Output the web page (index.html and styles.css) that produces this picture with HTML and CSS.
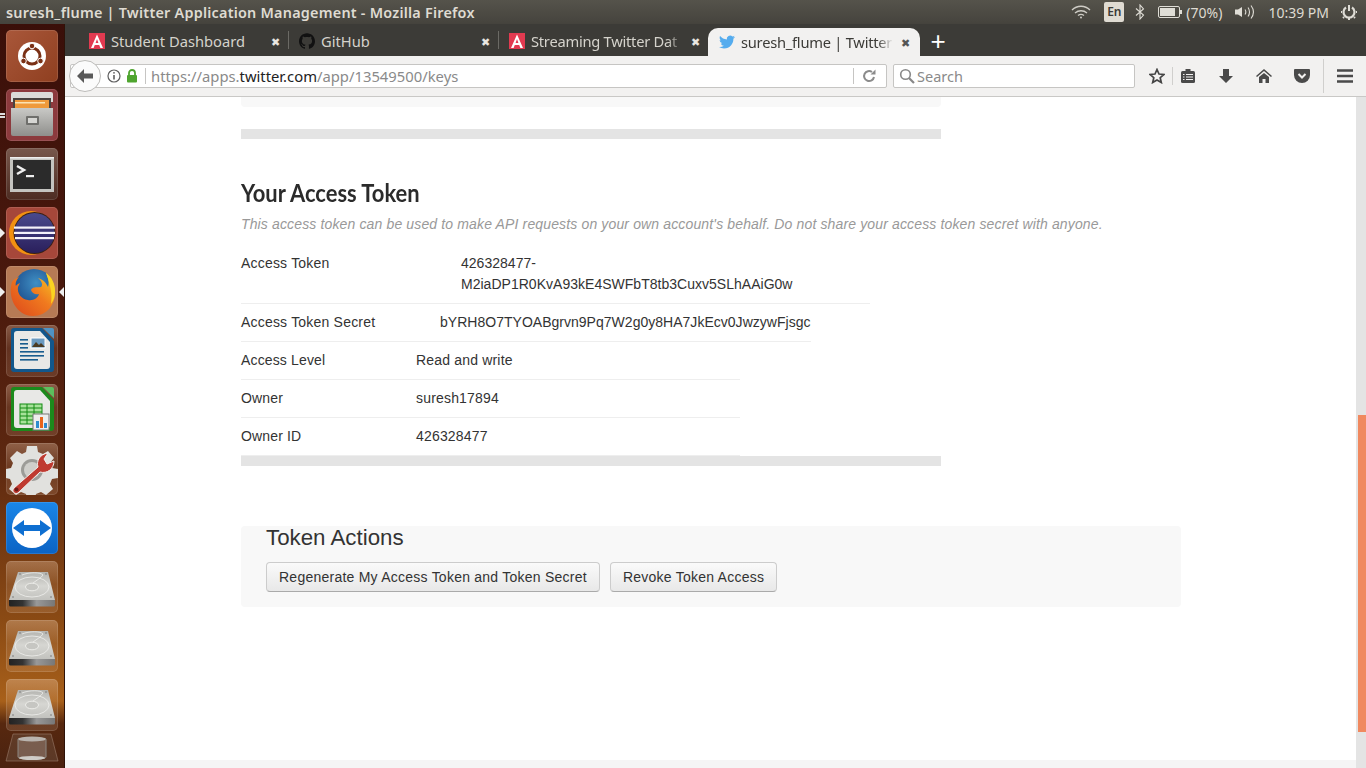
FILE: index.html
```html
<!DOCTYPE html>
<html lang="en">
<head>
  <meta charset="UTF-8" />
  <title>suresh_flume | Twitter Application Management - Mozilla Firefox</title>
  <link rel="stylesheet" href="styles.css">
</head>
<body>
  <svg class="defs" aria-hidden="true">
    <defs>
      <linearGradient id="driveTop" x1="0" y1="0" x2="0" y2="1"><stop offset="0" stop-color="#b4b4b0"/><stop offset=".5" stop-color="#d6d6d2"/><stop offset="1" stop-color="#c2c2be"/></linearGradient>
      <linearGradient id="driveSlot" x1="0" y1="0" x2="1" y2="0"><stop offset="0" stop-color="#222"/><stop offset=".3" stop-color="#333"/><stop offset=".6" stop-color="#999"/><stop offset="1" stop-color="#777"/></linearGradient>
      <linearGradient id="eclipseBall" x1="0" y1="0" x2="0" y2="1"><stop offset="0" stop-color="#4a4a8c"/><stop offset="1" stop-color="#2a1f5c"/></linearGradient>
      <linearGradient id="cabinet" x1="0" y1="0" x2="0" y2="1"><stop offset="0" stop-color="#c9c9c6"/><stop offset="1" stop-color="#8f8f8c"/></linearGradient>
      <radialGradient id="foxBlue" cx=".55" cy=".35" r=".6"><stop offset="0" stop-color="#3f8fc4"/><stop offset="1" stop-color="#1d4f8e"/></radialGradient>
      <linearGradient id="foxFire" x1="1" y1="0" x2="0" y2="1"><stop offset="0" stop-color="#f7cf22"/><stop offset=".45" stop-color="#f07a1f"/><stop offset="1" stop-color="#dc451b"/></linearGradient>
      <symbol id="fav-a" viewBox="0 0 16 16">
        <rect width="16" height="16" fill="#e23a50"/>
        <path d="M8 1.500 14 15h-2.600l-1.200-3H5.800l-1.200 3H2zM8 6 6.600 10h2.800z" fill="#fff"/>
      </symbol>
      <symbol id="drive" viewBox="0 0 52 52">
        <path d="M12 11h30l7 28H3z" fill="url(#driveTop)"/>
        <path d="M3 39h46v5a1.500 1.500 0 0 1-1.500 1.500h-43A1.500 1.500 0 0 1 3 44z" fill="url(#driveSlot)"/>
        <ellipse cx="26" cy="26" rx="17" ry="10" fill="none" stroke="#efefec" stroke-width=".8"/>
        <ellipse cx="26" cy="26" rx="6.500" ry="3.800" fill="#c6c6c2" stroke="#efefec" stroke-width=".9"/>
        <path d="M16 14c7-3 19-3 21 0-2 3-6 5-10 8" fill="none" stroke="#efefec" stroke-width=".8"/>
        <g fill="#777"><circle cx="14" cy="13" r=".8"/><circle cx="40" cy="13" r=".8"/><circle cx="7" cy="36" r=".8"/><circle cx="45" cy="36" r=".8"/></g>
      </symbol>
    </defs>
  </svg>

  <header class="topbar">
    <span class="win-title">suresh_flume | Twitter Application Management - Mozilla Firefox</span>
    <div class="indicators">
      <svg class="ind-wifi" width="20" height="14" viewBox="0 0 20 14" fill="none" stroke="#cfcdc6" stroke-width="1.300"><path d="M1 5c5-5 13-5 18 0M4 8c3.500-3 8.500-3 12 0M7 10.500c2-1.500 4-1.500 6 0"/><circle cx="10" cy="12.500" r="1" fill="#cfcdc6" stroke="none"/></svg>
      <span class="ind-lang">En</span>
      <svg class="ind-bt" width="10" height="16" viewBox="0 0 10 16" fill="none" stroke="#dfddd6" stroke-width="1.100"><path d="M1 4.500 8.500 11 5 15V1l3.500 4L1 11.500"/></svg>
      <svg class="ind-batt" width="24" height="12" viewBox="0 0 24 12"><rect x=".5" y=".5" width="21" height="11" rx="1.500" fill="none" stroke="#dfddd6"/><rect x="2" y="2" width="15" height="8" fill="#dfddd6"/><rect x="22" y="4" width="2" height="4" fill="#dfddd6"/></svg>
      <span class="ind-text ind-pct">(70%)</span>
      <svg class="ind-vol" width="20" height="16" viewBox="0 0 20 16" fill="none" stroke="#dfddd6" stroke-width="1.100"><path d="M1 5.500h3L8 3v10L4 10.500H1z" fill="#dfddd6" stroke="none"/><path d="M11 5.500c1 1.500 1 3.500 0 5M14 3.500c2 2.500 2 6.500 0 9M17 1.500c3 4 3 9 0 13"/></svg>
      <span class="ind-text ind-time">10:39 PM</span>
      <svg class="ind-power" width="16" height="16" viewBox="0 0 16 16" fill="none" stroke="#dfddd6"><path d="M5 3.500a5.500 5.500 0 1 0 6 0" stroke-width="2.200"/><path d="M8 1v6" stroke-width="2"/><path d="M8 13.500V16M1 8H0M16 8h-1M3 13l-1 1M13 13l1 1" stroke-width="2"/></svg>
    </div>
  </header>

  <div class="desktop">
    <nav class="launcher">
      <div class="tile tile-ubuntu">
        <svg width="52" height="52" viewBox="0 0 52 52"><circle cx="26" cy="26" r="14" fill="#fff"/><circle cx="26" cy="26" r="8" fill="none" stroke="#7a3015" stroke-width="3"/><circle cx="26" cy="16" r="2.800" fill="#7a3015" stroke="#fff"/><circle cx="17.500" cy="31" r="2.800" fill="#7a3015" stroke="#fff"/><circle cx="34.500" cy="31" r="2.800" fill="#7a3015" stroke="#fff"/></svg>
      </div>
      <div class="tile tile-files">
        <i class="pip pip-double"></i>
        <svg width="52" height="52" viewBox="0 0 52 52"><path d="M5 5a2 2 0 0 1 2-2h38a2 2 0 0 1 2 2v8H5z" fill="#dcdcd9"/><rect x="7" y="9" width="38" height="10" fill="#4a4440"/><rect x="9" y="11" width="34" height="9" fill="#ef9a3c"/><rect x="9" y="13" width="30" height="1.500" fill="#fbe3b4"/><path d="M5 19h42v26a2 2 0 0 1-2 2H7a2 2 0 0 1-2-2z" fill="url(#cabinet)"/><rect x="20" y="27" width="13" height="9" rx="1" fill="#6f6f6c"/><rect x="22" y="29" width="9" height="5" fill="#d6d6d3"/></svg>
      </div>
      <div class="tile tile-terminal">
        <svg width="52" height="52" viewBox="0 0 52 52"><rect x="4" y="9" width="44" height="35" fill="#c4c4c0"/><rect x="4" y="9" width="44" height="1.500" fill="#eee"/><rect x="7" y="12" width="38" height="29" fill="#2b2b2b"/><path d="M11 18l7 4-7 4" fill="none" stroke="#eee" stroke-width="2.500"/><rect x="20" y="27" width="8" height="2.200" fill="#eee"/></svg>
      </div>
      <div class="tile tile-eclipse">
        <i class="pip pip-left"></i>
        <svg width="52" height="52" viewBox="0 0 52 52"><circle cx="25" cy="26" r="22" fill="#f29111"/><circle cx="28.500" cy="26" r="21" fill="#3a1f14"/><circle cx="28.500" cy="26" r="20" fill="url(#eclipseBall)"/><rect x="8" y="19.500" width="41" height="2.200" fill="#f4f2fa"/><rect x="8" y="24.800" width="41" height="2.200" fill="#f4f2fa"/><rect x="9" y="30" width="39" height="2.200" fill="#f4f2fa"/></svg>
      </div>
      <div class="tile tile-firefox">
        <i class="pip pip-left"></i><i class="pip pip-right"></i>
        <svg width="52" height="52" viewBox="0 0 52 52"><circle cx="28" cy="23" r="20" fill="url(#foxBlue)"/><path d="M6 16C1 32 11 50 27 50c14 0 23-12 22-25-1-8-4-14-9-18 3 6 3 11 2 14-2-5-6-8-10-9 4 3 5 7 3 9-3 1-8-1-10 3 1 3 4 5 8 4-1 4-6 7-11 6-7-1-11-7-10-13l2-4c-2 1-4 2-4 3-1-2 0-6 3-9-3 1-6 3-7 5z" fill="url(#foxFire)"/><path d="M40 7c6 4 9 11 9 18 0 5-1 9-4 13 1-7 1-15-5-31z" fill="#fbd321"/></svg>
      </div>
      <div class="tile tile-glass">
        <svg width="52" height="52" viewBox="0 0 52 52"><path d="M8 3h28l12 13v28a3 3 0 0 1-3 3H8a3 3 0 0 1-3-3V6a3 3 0 0 1 3-3z" fill="#12578c"/><path d="M11 6h23l10 11v24a3 3 0 0 1-3 3H11a3 3 0 0 1-3-3V9a3 3 0 0 1 3-3z" fill="#e8e8e6"/><path d="M37 3h9a2 2 0 0 1 2 2v9z" fill="#4f93c4"/><g fill="#185c8e"><rect x="14" y="14" width="8" height="1.600"/><rect x="14" y="18" width="8" height="1.600"/><rect x="14" y="22" width="8" height="1.600"/><rect x="14" y="26" width="24" height="1.600"/><rect x="14" y="30" width="24" height="1.600"/><rect x="14" y="34" width="18" height="1.600"/></g><rect x="25" y="13" width="14" height="10" fill="#6b9ac0" stroke="#fff"/><path d="M26 22l4-5 3 3 2-2 4 4z" fill="#4b3b22"/></svg>
      </div>
      <div class="tile tile-glass">
        <svg width="52" height="52" viewBox="0 0 52 52"><path d="M8 3h28l12 13v28a3 3 0 0 1-3 3H8a3 3 0 0 1-3-3V6a3 3 0 0 1 3-3z" fill="#1c8a1c"/><path d="M11 6h23l10 11v24a3 3 0 0 1-3 3H11a3 3 0 0 1-3-3V9a3 3 0 0 1 3-3z" fill="#e8e8e6"/><path d="M37 3h9a2 2 0 0 1 2 2v9z" fill="#5cbf5c"/><rect x="14" y="20" width="22" height="20" fill="#a7e29a" stroke="#138a13"/><path d="M14 24h22M14 28h22M14 32h22M14 36h22M21 20v20M28 20v20" stroke="#138a13"/><rect x="27" y="30" width="16" height="16" fill="#eee" stroke="#777"/><rect x="30" y="37" width="3" height="7" fill="#2e8ccf"/><rect x="34" y="33" width="3" height="11" fill="#e8641b"/><rect x="38" y="39" width="3" height="5" fill="#2e8ccf"/></svg>
      </div>
      <div class="tile tile-glass">
        <svg width="52" height="52" viewBox="0 0 52 52"><path d="M21 3h10l1 6 5 2 5-3 6 7-4 5 2 5 6 1v9l-6 1-2 5 3 5-7 6-5-3-5 2-1 4H21l-1-4-5-2-5 3-7-6 3-5-2-5-4-1v-9l5-1 2-5-3-5 7-7 5 3 4-2z" fill="#e1e1de"/><circle cx="26" cy="27" r="11" fill="#9c9c98"/><circle cx="26" cy="27" r="8" fill="#cfcfcb"/><path d="M8 45l24-21c-2-6 2-13 10-14l-4 6 3 5 7-3c0 8-7 13-14 11L12 50c-3 2-7-2-4-5z" fill="#bf3a30" stroke="#f0efec" stroke-width="1"/><circle cx="10.500" cy="46.500" r="2" fill="#6d1b17"/></svg>
      </div>
      <div class="tile tile-teamviewer">
        <svg width="52" height="52" viewBox="0 0 52 52"><circle cx="26" cy="26" r="20" fill="#fff"/><path d="M7 26l11-8v5h16v-5l11 8-11 8v-5H18v5z" fill="#0e6fd1"/></svg>
      </div>
      <div class="tile tile-glass"><svg width="52" height="52"><use href="#drive"/></svg></div>
      <div class="tile tile-glass"><svg width="52" height="52"><use href="#drive"/></svg></div>
      <div class="tile tile-glass"><svg width="52" height="52"><use href="#drive"/></svg></div>
      <div class="trash">
        <svg width="56" height="30" viewBox="0 0 56 30"><path d="M9 1h38l7 27H2z" fill="#6a4a38" fill-opacity=".55" stroke="#9a7c6a" stroke-opacity=".6"/><ellipse cx="28" cy="6" rx="14" ry="2.500" fill="#b9b4ae"/><path d="M14 6v18c0 3 28 3 28 0V6" fill="#b9b4ae" fill-opacity=".3" stroke="#8c8781"/><ellipse cx="28" cy="25" rx="13" ry="2" fill="#cfcbc6"/></svg>
      </div>
    </nav>

    <div class="browser">
      <div class="tabstrip">
        <div class="tab">
          <svg class="favicon"><use href="#fav-a"/></svg>
          <span class="tab-title">Student Dashboard</span>
          <span class="tab-close">&#10006;</span>
        </div>
        <div class="tab">
          <svg class="favicon" viewBox="0 0 24 24"><path fill="#111" d="M12 .297c-6.630 0-12 5.373-12 12 0 5.303 3.438 9.800 8.205 11.385.6.113.82-.258.82-.577 0-.285-.01-1.040-.015-2.040-3.338.724-4.042-1.610-4.042-1.610C4.422 18.070 3.633 17.700 3.633 17.700c-1.087-.744.084-.729.084-.729 1.205.084 1.838 1.236 1.838 1.236 1.070 1.835 2.809 1.305 3.495.998.108-.776.417-1.305.76-1.605-2.665-.3-5.466-1.332-5.466-5.930 0-1.310.465-2.380 1.235-3.220-.135-.303-.54-1.523.105-3.176 0 0 1.005-.322 3.300 1.230.96-.267 1.980-.399 3-.405 1.020.006 2.040.138 3 .405 2.280-1.552 3.285-1.230 3.285-1.230.645 1.653.24 2.873.12 3.176.765.84 1.230 1.910 1.230 3.220 0 4.610-2.805 5.625-5.475 5.920.42.36.81 1.096.81 2.220 0 1.606-.015 2.896-.015 3.286 0 .315.21.69.825.57C20.565 22.092 24 17.592 24 12.297c0-6.627-5.373-12-12-12"/></svg>
          <span class="tab-title">GitHub</span>
          <span class="tab-close">&#10006;</span>
        </div>
        <div class="tab tab-last">
          <svg class="favicon"><use href="#fav-a"/></svg>
          <span class="tab-title tab-fade">Streaming Twitter Dat</span>
          <span class="tab-close">&#10006;</span>
        </div>
        <div class="tab tab-active">
          <svg class="favicon" viewBox="0 0 24 24"><path fill="#55acee" d="M23.953 4.570a10 10 0 0 1-2.825.775 4.958 4.958 0 0 0 2.163-2.723c-.951.555-2.005.959-3.127 1.184a4.920 4.920 0 0 0-8.384 4.482C7.690 8.095 4.067 6.130 1.640 3.162a4.822 4.822 0 0 0-.666 2.475c0 1.710.87 3.213 2.188 4.096a4.904 4.904 0 0 1-2.228-.616v.06a4.923 4.923 0 0 0 3.946 4.827 4.996 4.996 0 0 1-2.212.085 4.936 4.936 0 0 0 4.604 3.417 9.867 9.867 0 0 1-6.102 2.105c-.39 0-.779-.023-1.170-.067a13.995 13.995 0 0 0 7.557 2.209c9.053 0 13.998-7.496 13.998-13.985 0-.21 0-.42-.015-.63A9.935 9.935 0 0 0 24 4.590z"/></svg>
          <span class="tab-title tab-fade">suresh_flume | Twitter</span>
          <span class="tab-close">&#10006;</span>
        </div>
        <span class="tab-new">+</span>
      </div>

      <div class="navbar">
        <div class="urlbar">
          <span class="back-btn">
            <svg width="18" height="16" viewBox="0 0 18 16"><path d="M8 1 1 8l7 7V10.500h9v-5H8z" fill="#595959"/></svg>
          </span>
          <svg class="url-info" width="16" height="16" viewBox="0 0 16 16" fill="none" stroke="#5f5f5f" stroke-width="1.200"><circle cx="8" cy="8" r="6"/><path d="M8 7v4.500" stroke-width="1.600"/><circle cx="8" cy="4.800" r=".9" fill="#5f5f5f" stroke="none"/></svg>
          <svg class="url-lock" width="12" height="14" viewBox="0 0 12 14"><path d="M3 6V4a3 3 0 0 1 6 0v2" fill="none" stroke="#4fa52f" stroke-width="1.800"/><rect x="1" y="6" width="10" height="7.500" rx="1" fill="#4fa52f"/></svg>
          <span class="url-text">https://apps.<b>twitter.com</b>/app/13549500/keys</span>
          <svg class="url-reload" width="16" height="16" viewBox="0 0 16 16" fill="none" stroke="#8b8b8b" stroke-width="2"><path d="M13 9a5 5 0 1 1-2-5"/><path d="M14.500 1.500v5h-5z" fill="#8b8b8b" stroke="none"/></svg>
        </div>
        <div class="searchbar">
          <svg width="16" height="16" viewBox="0 0 16 16" fill="none" stroke="#888" stroke-width="1.600"><circle cx="6.500" cy="6.500" r="4.800"/><path d="M10 10l5 5" stroke-width="2.200"/></svg>
          <span>Search</span>
        </div>
        <div class="tools">
          <svg class="tool tool-star" width="16" height="16" viewBox="0 0 16 16"><path d="M8 1.500l2 4.500 4.900.5-3.700 3.200 1.100 4.800L8 12l-4.300 2.500 1.100-4.800L1.100 6.500 6 6z" fill="none" stroke="#444" stroke-width="1.700"/></svg>
          <span class="tool-sep tool-sep-short"></span>
          <svg class="tool tool-list" width="16" height="16" viewBox="0 0 16 16"><rect x="1" y="3" width="14" height="12" rx="1.500" fill="#4a4a4a"/><rect x="5.500" y="1" width="5" height="3" fill="#4a4a4a"/><path d="M3 6.500h1.500M3 9h1.500M3 11.500h1.500M6 6.500h7M6 9h7M6 11.500h7" stroke="#f2f1f0"/></svg>
          <svg class="tool tool-down" width="16" height="16" viewBox="0 0 16 16"><path d="M5 1h6v7h4l-7 7-7-7h4z" fill="#4a4a4a"/></svg>
          <svg class="tool tool-home" width="16" height="16" viewBox="0 0 16 16"><path d="M8 1 0 8l1 1 7-6 7 6 1-1z" fill="#4a4a4a"/><path d="M3 9l5-4 5 4v6h-3.500v-4h-3v4H3z" fill="#4a4a4a"/></svg>
          <svg class="tool tool-pocket" width="16" height="16" viewBox="0 0 16 16"><path d="M1 1h14a1 1 0 0 1 1 1v5a8 8 0 0 1-16 0V2a1 1 0 0 1 1-1z" fill="#4a4a4a"/><path d="M4.500 6 8 9.500 11.500 6" fill="none" stroke="#f2f1f0" stroke-width="2"/></svg>
          <span class="tool-sep tool-sep-tall"></span>
          <svg class="tool tool-menu" width="16" height="14" viewBox="0 0 16 14"><path d="M0 1.500h16M0 7h16M0 12.500h16" stroke="#4a4a4a" stroke-width="2.400"/></svg>
        </div>
      </div>

      <div class="viewport">
        <main class="page">
          <div class="content">
            <div class="well well-cut"></div>
            <div class="bar"></div>

            <h2 class="section-title">Your Access Token</h2>
            <p class="section-note">This access token can be used to make API requests on your own account's behalf. Do not share your access token secret with anyone.</p>

            <div class="details">
              <div class="row row-token">
                <span class="row-label">Access Token</span>
                <span class="row-value">426328477-<br>M2iaDP1R0KvA93kE4SWFbT8tb3Cuxv5SLhAAiG0w</span>
              </div>
              <div class="row row-secret">
                <span class="row-label">Access Token Secret</span>
                <span class="row-value">bYRH8O7TYOABgrvn9Pq7W2g0y8HA7JkEcv0JwzywFjsgc</span>
              </div>
              <div class="row row-plain">
                <span class="row-label">Access Level</span>
                <span class="row-value">Read and write</span>
              </div>
              <div class="row row-plain">
                <span class="row-label">Owner</span>
                <span class="row-value">suresh17894</span>
              </div>
              <div class="row row-plain">
                <span class="row-label">Owner ID</span>
                <span class="row-value">426328477</span>
              </div>
            </div>
            <div class="bar"></div>

            <section class="well actions">
              <h3>Token Actions</h3>
              <div class="action-btns">
                <button type="button">Regenerate My Access Token and Token Secret</button>
                <button type="button">Revoke Token Access</button>
              </div>
            </section>
          </div>
          <div class="page-foot"></div>
        </main>
        <div class="scrollbar"><div class="scroll-thumb"></div></div>
      </div>
    </div>
  </div>
</body>
</html>
```

FILE: styles.css
```css
* { box-sizing: border-box; }
html, body { height: 100%; }
body {
  margin: 0; height: 768px; overflow: hidden; background: #fff;
  font-family: 'Liberation Sans', Arial, sans-serif; color: #333;
}
.defs { position: absolute; width: 0; height: 0; }

/* ubuntu top panel */
.topbar {
  height: 24px; display: flex; align-items: center; justify-content: space-between;
  background: linear-gradient(#55534b, #45433d); color: #dfdbd2;
}
.win-title {
  padding-left: 6px; font: 600 14.4px 'Noto Sans', sans-serif; letter-spacing: .23px; white-space: nowrap;
}
.indicators { display: flex; align-items: center; height: 24px; }
.ind-wifi { margin-right: 13px; }
.ind-lang {
  width: 20px; height: 20px; margin-right: 11px; background: #dfdbd2; color: #3c3b37;
  border-radius: 2px; font: 600 12px/20px 'Noto Sans', sans-serif; text-align: center;
}
.ind-bt { margin-right: 13px; }
.ind-batt { margin-right: 4px; }
.ind-text { font: 14px 'Noto Sans', sans-serif; color: #dfdbd2; white-space: nowrap; }
.ind-pct { margin-right: 12px; }
.ind-vol { margin-right: 14px; }
.ind-time { margin-right: 12px; }
.ind-power { margin-right: 9px; }

.desktop { display: flex; height: 744px; }

/* launcher */
.launcher {
  width: 65px; flex: none; padding: 6px 7px 0 6px; display: flex; flex-direction: column; gap: 7px;
  background: linear-gradient(#3a0f09 0%, #4a190d 35%, #5c2710 58%, #8a4a14 80%, #a8601a 91%, #57280f 94%, #4a2210 100%);
  border-right: 1px solid #2e1208;
}
.tile {
  position: relative; width: 52px; height: 52px; border-radius: 5px; flex: none;
  box-shadow: inset 0 0 0 1px rgba(255, 255, 255, .12);
}
.tile svg { display: block; }
.tile-ubuntu { background: linear-gradient(135deg, #a9573a, #8f3f20); }
.tile-files { background: #8c3a3d; }
.tile-terminal { background: linear-gradient(#77574c, #4d2c22); }
.tile-eclipse { background: #a6473a; }
.tile-firefox { background: #b67a55; }
.tile-glass { background: linear-gradient(rgba(255, 220, 190, .32), rgba(255, 220, 190, .1) 45%, rgba(255, 220, 190, .14)); }
.tile-teamviewer { background: linear-gradient(#1a86e8, #0b63c4); }
.trash { margin-top: -5px; margin-left: -2px; height: 30px; }
.trash svg { display: block; }
.pip { position: absolute; top: 21px; width: 0; height: 0; border: 5px solid transparent; }
.pip-left { left: -6px; border-left-color: #eee; border-right-width: 0; }
.pip-right { right: -6px; border-right-color: #eee; border-left-width: 0; z-index: 2; }
.pip-double { left: -6px; top: 24px; width: 5px; height: 5px; border: 0; border-top: 2px solid #ddd; border-bottom: 2px solid #ddd; }

/* firefox chrome */
.browser { flex: 1; min-width: 0; display: flex; flex-direction: column; }
.tabstrip {
  height: 32px; flex: none; display: flex; align-items: stretch; padding-left: 14px;
  background: #3c3b37; color: #d5d3cc; font: 14.700px 'Noto Sans', sans-serif;
}
.tab {
  width: 210px; display: flex; align-items: center; padding: 2px 5px 0 10px; position: relative;
}
.tab::after {
  content: ''; position: absolute; right: 0; top: 7px; bottom: 7px; width: 1px; background: #6b6a65;
}
.tab-last { width: 209px; padding-right: 4px; }
.tab-last::after, .tab-active::after { display: none; }
.favicon { width: 16px; height: 16px; flex: none; margin-right: 6px; }
.tab-title { flex: 1; min-width: 0; overflow: hidden; white-space: nowrap; }
.tab-fade {
  letter-spacing: -.25px;
  -webkit-mask-image: linear-gradient(to right, #000 90%, transparent);
  mask-image: linear-gradient(to right, #000 90%, transparent);
}
.tab-close { width: 18px; margin-left: 3px; text-align: center; font-size: 11px; color: #e8e6e0; }
.tab-active {
  width: 212px; background: #f2f1f0; color: #3c3b37; border-radius: 10px 10px 0 0; margin-top: 4px; padding: 0 6px 0 11px;
}
.tab-active .tab-close { color: #555; }
.tab-new { width: 36px; padding-top: 1px; text-align: center; font: 400 26px/32px 'Liberation Sans', sans-serif; color: #fff; }

.navbar {
  height: 41px; flex: none; display: flex; align-items: center; padding: 0 0 0 5px;
  background: #f2f1f0; border-bottom: 1px solid #c9c8c6;
}
.urlbar {
  width: 817px; height: 24px; flex: none; display: flex; align-items: center; position: relative; padding-left: 35px;
  background: #fff; border: 1px solid #c6c5c3; border-radius: 2px;
}
.back-btn {
  position: absolute; left: -2px; top: -5px; width: 32px; height: 32px; border-radius: 50%;
  display: flex; align-items: center; justify-content: center;
  background: #fbfbfb; border: 1px solid #bdbcba;
}
.url-info { margin-right: 4px; }
.url-lock { margin-right: 7px; }
.url-text {
  flex: 1; padding-left: 5px; border-left: 1px solid #c6c5c3; height: 16px;
  font: 14.800px/16px 'Noto Sans', sans-serif; color: #8a8a8a; white-space: nowrap;
}
.url-text b { font-weight: 400; color: #222; }
.url-reload { box-sizing: content-box; padding-left: 7px; margin-right: 9px; border-left: 1px solid #c6c5c3; }
.searchbar {
  width: 242px; height: 24px; flex: none; margin-left: 6px; display: flex; align-items: center; gap: 2px; padding-left: 5px;
  background: #fff; border: 1px solid #c6c5c3; border-radius: 2px;
  font: 14.500px 'Noto Sans', sans-serif; color: #8a8a8a;
}
.tools { flex: 1; min-width: 0; display: flex; align-items: center; }
.tool { flex: none; }
.tool-sep { flex: none; width: 1px; background: #d0cfcd; }
.tool-sep-short { height: 18px; margin: 0 7px; }
.tool-sep-tall { height: 34px; margin: 0 13px; }
.tool-star { margin-left: 14px; }
.tool-down, .tool-home, .tool-pocket { margin-left: 22px; }

.viewport { flex: 1; min-height: 0; display: flex; }
.page { flex: 1; min-width: 0; display: flex; flex-direction: column; background: #fff; }
.content { flex: 1; padding-left: 176px; }
.page-foot { height: 8px; flex: none; background: #f5f5f5; }
.scrollbar { width: 10px; flex: none; padding: 318px 0 0 2px; background: #e4e4e4; }
.scroll-thumb { height: 317px; background: #f0895f; }

.well { background: #f8f8f8; border-radius: 4px; }
.well-cut { width: 700px; height: 10px; border-radius: 0 0 4px 4px; }
.bar { width: 700px; height: 10px; margin-top: 22px; background: #e4e4e4; }

/* the original heading font is a condensed one, squeeze Lato to get there */
.section-title {
  margin: 38px 0 0; font: 700 25px/30px 'Lato', sans-serif; color: #2b2b2b;
  transform: scaleX(.877); transform-origin: left center;
}
.section-note { margin: 7px 0 0; font: italic 14px/20px 'Liberation Sans', sans-serif; color: #999; letter-spacing: .14px; }

.details { margin-top: 9px; }
.details + .bar { margin-top: 0; }
.row {
  display: flex; padding: 8px 0 9px; font-size: 14px; line-height: 20px; border-bottom: 1px solid #eee;
}
.row-label { letter-spacing: .2px; }
.row-value { letter-spacing: .02px; }
.row-token { width: 629px; padding: 10px 0 8px; line-height: 21px; }
.row-token .row-label { width: 220px; }
.row-secret { width: 570px; }
.row-secret .row-label { width: 199px; }
.row-plain { width: 499px; }
.row-plain .row-label { width: 175px; letter-spacing: .15px; }
.row-plain .row-value { letter-spacing: .18px; }

.actions { width: 940px; height: 81px; margin-top: 60px; padding: 0 25px; }
.actions h3 { margin: 0; font: 400 22.3px/24px 'Liberation Sans', sans-serif; color: #333; }
.action-btns { display: flex; gap: 10px; margin-top: 12px; }
.action-btns button {
  height: 30px; padding: 0 12px; font: 14px 'Liberation Sans', sans-serif; color: #333; letter-spacing: .24px;
  background: linear-gradient(#fafafa, #e8e8e8); border: 1px solid #ccc; border-bottom-color: #aaa; border-radius: 4px;
}
```
